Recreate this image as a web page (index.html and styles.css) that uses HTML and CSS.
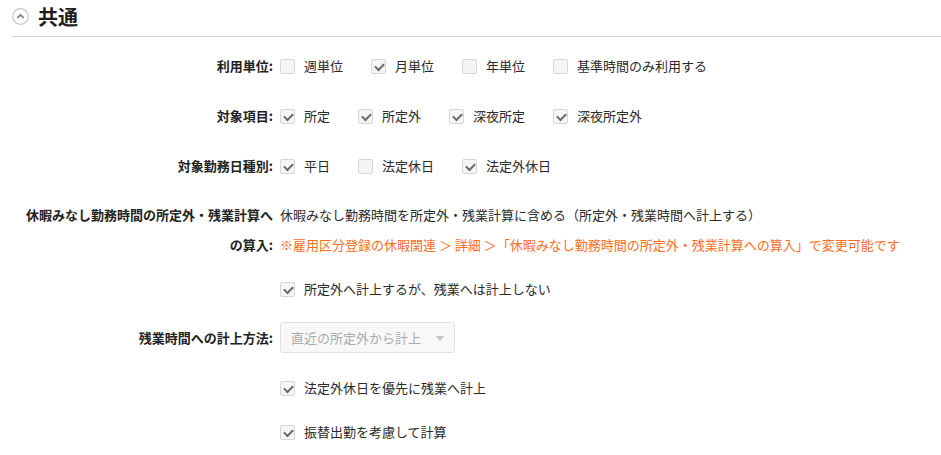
FILE: index.html
```html
<!DOCTYPE html>
<html lang="ja">
<head>
<meta charset="utf-8">
<link rel="stylesheet" href="styles.css">
</head>
<body>
<div class="page">
  <div class="section-head">
    <span class="toggle"><svg width="17" height="17" viewBox="0 0 17 17"><circle cx="8.5" cy="8.5" r="7.8" fill="#fff" stroke="#c8c8c8" stroke-width="1.2"/><path d="M5.3 10 L8.5 6.8 L11.7 10" fill="none" stroke="#888" stroke-width="1.8"/></svg></span>
    <h2 class="title">共通</h2>
  </div>
  <div class="form">
    <div class="row r1">
      <div class="label">利用単位:</div>
      <div class="field">
        <span class="opt"><span class="cb"></span>週単位</span>
        <span class="opt"><span class="cb on"></span>月単位</span>
        <span class="opt"><span class="cb"></span>年単位</span>
        <span class="opt"><span class="cb"></span>基準時間のみ利用する</span>
      </div>
    </div>
    <div class="row r2">
      <div class="label">対象項目:</div>
      <div class="field">
        <span class="opt"><span class="cb on"></span>所定</span>
        <span class="opt"><span class="cb on"></span>所定外</span>
        <span class="opt"><span class="cb on"></span>深夜所定</span>
        <span class="opt"><span class="cb on"></span>深夜所定外</span>
      </div>
    </div>
    <div class="row r3">
      <div class="label">対象勤務日種別:</div>
      <div class="field">
        <span class="opt"><span class="cb on"></span>平日</span>
        <span class="opt"><span class="cb"></span>法定休日</span>
        <span class="opt"><span class="cb on"></span>法定外休日</span>
      </div>
    </div>
    <div class="row r4 tall">
      <div class="label">休暇みなし勤務時間の所定外・残業計算への算入:</div>
      <div class="field block">
        <div>休暇みなし勤務時間を所定外・残業計算に含める（所定外・残業時間へ計上する）</div>
        <div class="note">※雇用区分登録の休暇関連 ＞ 詳細 ＞「休暇みなし勤務時間の所定外・残業計算への算入」で変更可能です</div>
      </div>
    </div>
    <div class="row r5">
      <div class="label"></div>
      <div class="field"><span class="opt"><span class="cb on"></span>所定外へ計上するが、残業へは計上しない</span></div>
    </div>
    <div class="row r6">
      <div class="label">残業時間への計上方法:</div>
      <div class="field">
        <span class="select">直近の所定外から計上<span class="arrow"></span></span>
      </div>
    </div>
    <div class="row r7">
      <div class="label"></div>
      <div class="field"><span class="opt"><span class="cb on"></span>法定外休日を優先に残業へ計上</span></div>
    </div>
    <div class="row r8">
      <div class="label"></div>
      <div class="field"><span class="opt"><span class="cb on"></span>振替出勤を考慮して計算</span></div>
    </div>
  </div>
</div>
</body>
</html>
```
FILE: styles.css
```css
* { box-sizing: border-box; }
body {
  margin: 0;
  background: #fff;
  font-family: "Noto Sans CJK JP", "Noto Sans", sans-serif;
  font-size: 13px;
  color: #333;
}
.page { padding-left: 12px; }
.section-head {
  display: flex;
  align-items: center;
  height: 37px;
  border-bottom: 1px solid #cfcfcf;
  padding-bottom: 3px;
}
.toggle { display: flex; width: 17px; height: 17px; margin-right: 9px; }
.title {
  margin: 0;
  font-size: 20px;
  font-weight: bold;
  color: #1e1e1e;
  line-height: 24px;
}
.form { padding-top: 19px; padding-left: 9px; }
.row {
  display: grid;
  grid-template-columns: 252px 1fr;
  column-gap: 7px;
  align-items: center;
  line-height: 20px;
}
.label {
  text-align: right;
  font-weight: bold;
  color: #222;
}
.field { display: flex; align-items: center; color: #2a2a2a; }
.field.block { display: block; }
.opt {
  display: inline-flex;
  align-items: center;
  margin-right: 28px;
  white-space: nowrap;
}
.cb {
  width: 15px;
  height: 15px;
  border: 1px solid #d6d6d6;
  border-radius: 2px;
  background: #f5f5f5;
  margin-right: 9px;
  position: relative;
}
.cb.on::after {
  content: "";
  position: absolute;
  left: 3px;
  top: 3px;
  width: 7px;
  height: 4px;
  border-left: 2.5px solid #666;
  border-bottom: 2.5px solid #666;
  transform: rotate(-45deg);
  transform-origin: center;
}
.r2, .r3 { margin-top: 30px; }
.tall { margin-top: 24px; line-height: 30px; align-items: start; }
.note { color: #ff6d1f; }
.r5 { margin-top: 19px; }
.r6 { margin-top: 23px; }
.r7 { margin-top: 25px; }
.r8 { margin-top: 24px; }
.select {
  display: inline-flex;
  align-items: center;
  width: 175px;
  height: 31px;
  border: 1px solid #e0e0e0;
  border-radius: 3px;
  background: #f8f8f8;
  color: #aaa;
  padding-left: 10px;
  position: relative;
}
.arrow {
  position: absolute;
  right: 10px;
  top: 13px;
  border-left: 4px solid transparent;
  border-right: 4px solid transparent;
  border-top: 5px solid #c4c4c4;
}
```
